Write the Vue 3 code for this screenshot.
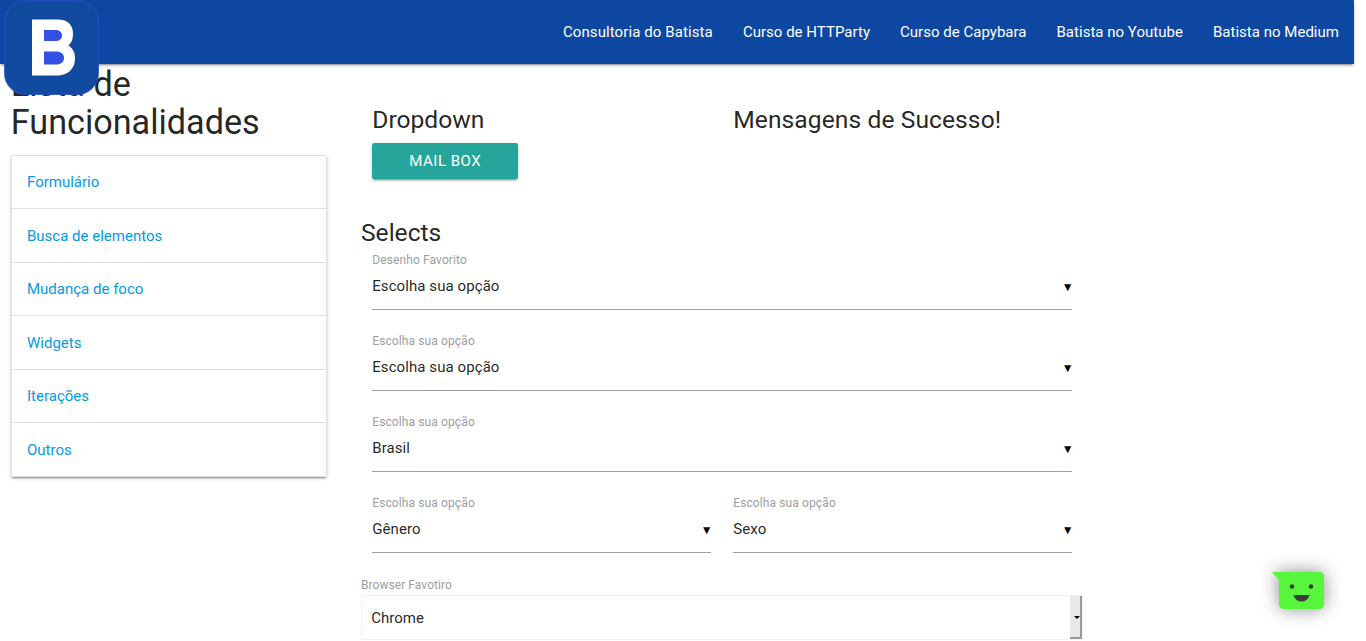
<script setup>
const links = ['Consultoria do Batista', 'Curso de HTTParty', 'Curso de Capybara', 'Batista no Youtube', 'Batista no Medium']
const features = ['Formulário', 'Busca de elementos', 'Mudança de foco', 'Widgets', 'Iterações', 'Outros']
const rows = [
  [{ label: 'Desenho Favorito', value: 'Escolha sua opção' }],
  [{ label: 'Escolha sua opção', value: 'Escolha sua opção' }],
  [{ label: 'Escolha sua opção', value: 'Brasil' }],
  [{ label: 'Escolha sua opção', value: 'Gênero' }, { label: 'Escolha sua opção', value: 'Sexo' }],
]
</script>

<template>
  <div class="page">
    <nav class="nav">
      <svg class="logo" viewBox="0 0 96 96" aria-label="Batista">
        <rect x="0.5" y="0.5" width="94" height="94" rx="21" fill="#114b9f" stroke="#2a50cc" stroke-width="0.8" />
        <path d="M28 19.500H54C64 19.500 69 25 69 34C69 39 67.500 43 64.500 45.500C68.500 48 71 52 71 58C71 69 64 75.500 53 75.500H28Z" fill="#fff" />
        <path d="M40 30H51C55.500 30 58 32 58 35.500C58 39 55.500 41 51 41H40ZM40 51.500H52C57 51.500 60 54 60 58C60 62 57 64.500 52 64.500H40Z" fill="#3350e4" />
      </svg>
      <a v-for="l in links" :key="l" class="nav-link">{{ l }}</a>
    </nav>
    <div class="body">
      <aside class="side">
        <h4>Lista de Funcionalidades</h4>
        <ul class="collection">
          <li v-for="f in features" :key="f"><a>{{ f }}</a></li>
        </ul>
      </aside>
      <main class="main">
        <div class="top">
          <section class="cell">
            <h5>Dropdown</h5>
            <button class="btn">Mail Box</button>
          </section>
          <section class="cell"><h5 class="messages">Mensagens de Sucesso!</h5></section>
        </div>
        <h5 class="selects">Selects</h5>
        <div v-for="(r, i) in rows" :key="i" class="row">
          <div v-for="f in r" :key="f.value" class="field">
            <label>{{ f.label }}</label>
            <div class="input"><span>{{ f.value }}</span><span class="caret">▼</span></div>
          </div>
        </div>
        <label class="browser-label">Browser Favotiro</label>
        <div class="browser">
          <span>Chrome</span>
          <span class="drop"><i></i></span>
        </div>
      </main>
    </div>
    <svg class="chat" viewBox="0 0 52 38">
      <path d="M0 0H47Q52 0 52 5V32Q52 37 47 37H12Q7 37 7 32V8Z" fill="#57f53b" />
      <circle cx="20" cy="14.500" r="2.200" fill="#3b3b3b" />
      <circle cx="39" cy="14.500" r="2.200" fill="#3b3b3b" />
      <path d="M21.500 23H37.500C36.500 27 33.500 29.500 29.500 29.500S22.500 27 21.500 23Z" fill="#3b3b3b" />
    </svg>
  </div>
</template>

<style>
html, body { margin: 0; background: #fff; overflow: hidden; }
</style>

<style scoped>
* { box-sizing: border-box; }
.page { width: 1354px; height: 641px; font: 15px/1.5 Roboto, "Liberation Sans", sans-serif; color: rgba(0, 0, 0, .87); }
.nav { position: relative; height: 64px; background: #0d47a1; display: flex; justify-content: flex-end; box-shadow: 0 2px 2px 0 rgba(0,0,0,.14), 0 1px 5px 0 rgba(0,0,0,.12), 0 3px 1px -2px rgba(0,0,0,.2); }
.nav-link { padding: 0 15px; line-height: 64px; color: #fff; letter-spacing: .02px; }
.nav-link:first-of-type { letter-spacing: .1px; }
.logo { position: absolute; left: 4px; top: 0; width: 96px; height: 96px; z-index: 1; }
.body { display: flex; }
.side { width: 338.5px; padding: 2px 11.25px 0; }
h4, h5 { font-weight: 400; line-height: 110%; margin: 0; }
h4 { font-size: 34.2px; margin-bottom: 13.68px; margin-left: -.5px; }
.collection { list-style: none; margin: 0; padding: 0; border: 1px solid #e0e0e0; border-radius: 2px; overflow: hidden; box-shadow: 0 2px 2px 0 rgba(0,0,0,.14), 0 1px 5px 0 rgba(0,0,0,.12), 0 3px 1px -2px rgba(0,0,0,.2); }
.collection li { height: 53.5px; padding: 15px 15px 15px 14.75px; line-height: 22.5px; border-bottom: 1px solid #e0e0e0; color: #039be5; }
.collection li:nth-child(even) { padding-top: 15.75px; }
.collection li:last-child { border-bottom: 0; height: 52.5px; }
.main { width: 722px; margin-left: 22.5px; padding-top: 42px; }
.top { display: flex; height: 113.3px; }
.cell { width: 50%; padding: 0 11.25px; }
h5 { font-size: 24.6px; margin-bottom: 9.84px; }
.messages { letter-spacing: .08px; }
.btn { display: block; width: 146px; height: 36px; border: 0; border-radius: 2px; padding: 0; background: #26a69a; color: #fff; font: 15px/36px Roboto, sans-serif; letter-spacing: .5px; text-transform: uppercase; box-shadow: 0 2px 2px 0 rgba(0,0,0,.14), 0 1px 5px 0 rgba(0,0,0,.12), 0 3px 1px -2px rgba(0,0,0,.2); }
.selects { margin-bottom: 5px; }
.row { display: flex; height: 81px; }
.field { flex: 1; padding: 0 11.25px; }
label { display: block; font-size: 12px; line-height: 18px; color: #9e9e9e; letter-spacing: .11px; }
.input { height: 46px; margin-top: -5px; border-bottom: 1px solid #9e9e9e; display: flex; justify-content: space-between; line-height: 45px; letter-spacing: .08px; }
.caret { font-size: 12px; line-height: 47px; color: #000; letter-spacing: 0; margin-right: -2px; }
.browser-label { margin-top: 1px; letter-spacing: .06px; }
.browser { height: 45px; margin-top: 1px; border: 1px solid #f2f2f2; border-radius: 2px; padding-left: 9.25px; display: flex; justify-content: space-between; line-height: 45px; }
.drop { width: 12px; height: 43px; background: #e9e9e7; border-right: 2px solid #999; border-bottom: 2px solid #999; display: flex; align-items: center; justify-content: center; }
.drop i { border: 3px solid transparent; border-top-color: #000; border-bottom: 0; margin: 2px 0 0 3px; }
.chat { position: absolute; left: 1272px; top: 572px; width: 52px; height: 38px; overflow: visible; filter: drop-shadow(0 0 9px rgba(0,0,0,.45)); }
</style>
